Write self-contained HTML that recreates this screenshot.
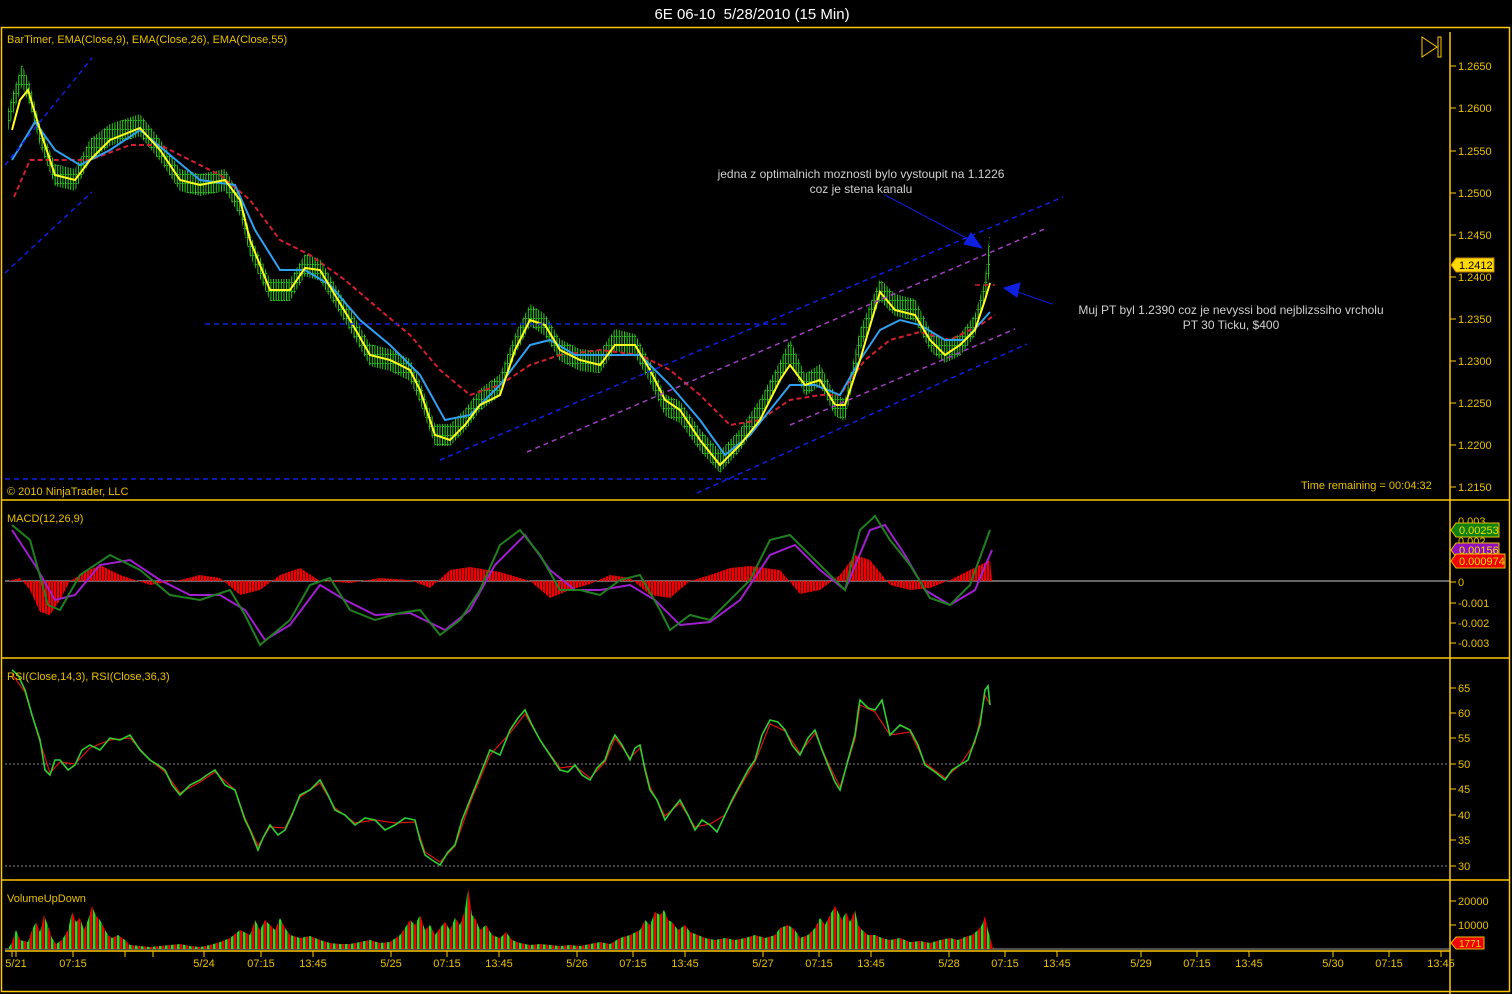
<!DOCTYPE html>
<html><head><meta charset="utf-8"><style>
body{margin:0;background:#000;width:1512px;height:994px;overflow:hidden;font-family:"Liberation Sans",sans-serif}
svg{display:block}
text{font-family:"Liberation Sans",sans-serif}
</style></head><body>
<svg width="1512" height="994" xmlns="http://www.w3.org/2000/svg">
<defs>
<pattern id="vol" width="6" height="10" patternUnits="userSpaceOnUse">
<rect x="0" y="0" width="2.6" height="10" fill="#f00000"/><rect x="3" y="0" width="2.6" height="10" fill="#20e020"/>
</pattern>
<pattern id="hist" width="3" height="10" patternUnits="userSpaceOnUse">
<rect x="0" y="0" width="2.4" height="10" fill="#f00000"/>
</pattern>
<pattern id="pb" width="2.6" height="9" patternUnits="userSpaceOnUse">
<rect x="0" y="0" width="1" height="9" fill="#30d020"/><rect x="1" y="3" width="1" height="1" fill="#30d020"/>
</pattern>
</defs>
<rect width="1512" height="994" fill="#000"/>
<text x="752" y="19" fill="#fff" font-size="15" text-anchor="middle" xml:space="preserve">6E 06-10  5/28/2010 (15 Min)</text>
<g fill="none" stroke="#ffc800" stroke-width="1.5">
<rect x="1.5" y="27.5" width="1508" height="964"/>
<line x1="1" y1="500" x2="1510" y2="500"/>
<line x1="1" y1="658" x2="1510" y2="658"/>
<line x1="1" y1="880" x2="1510" y2="880"/>
<line x1="1450" y1="32" x2="1450" y2="994"/>
<line x1="5" y1="951" x2="1450" y2="951"/>
</g>
<line x1="5" y1="581" x2="1450" y2="581" stroke="#ccc" stroke-width="1"/>
<line x1="5" y1="764" x2="1450" y2="764" stroke="#888" stroke-dasharray="2,2"/>
<line x1="5" y1="866" x2="1450" y2="866" stroke="#888" stroke-dasharray="2,2"/>
<line x1="5" y1="949" x2="1450" y2="949" stroke="#999"/>

<polygon fill="url(#pb)" points="8,109 14,89 22,64 30,84 40,124 55,164 75,169 90,139 110,124 140,114 160,139 180,169 200,174 225,169 240,194 250,234 270,279 290,279 305,254 320,259 335,284 350,309 370,344 390,349 410,359 420,381 435,424 450,424 465,409 480,389 500,374 515,334 530,304 545,314 560,339 580,349 600,351 615,329 635,334 650,361 665,394 680,401 700,429 720,451 740,429 760,399 780,361 790,339 805,374 820,364 835,394 845,399 860,329 880,279 895,294 915,299 930,329 945,341 960,334 975,314 985,279 990,230 990,270 985,301 975,336 960,356 945,363 930,351 915,321 895,316 880,301 860,351 845,421 835,416 820,386 805,396 790,361 780,383 760,421 740,451 720,473 700,451 680,423 665,416 650,383 635,356 615,351 600,373 580,371 560,361 545,336 530,326 515,356 500,396 480,411 465,431 450,446 435,446 420,403 410,381 390,371 370,366 350,331 335,306 320,281 305,276 290,301 270,301 250,256 240,216 225,191 200,196 180,191 160,161 140,136 110,146 90,161 75,191 55,186 40,146 30,106 22,86 14,111 8,131"/>

<polyline fill="none" stroke="#d02030" stroke-width="2" stroke-dasharray="5,3" points="14,197 30,160 55,160 90,160 130,145 160,145 190,160 220,175 250,200 280,240 310,255 345,280 380,310 410,335 440,370 470,395 500,385 530,365 560,355 600,350 640,355 670,370 700,395 730,425 760,420 790,400 820,395 840,395 865,360 890,340 920,332 950,340 980,325 995,315"/>
<polyline fill="none" stroke="#30a0f0" stroke-width="2" points="12,160 35,122 55,150 80,165 110,150 140,130 170,155 200,180 235,185 255,230 280,270 305,270 330,285 360,320 390,345 420,375 445,420 470,415 500,385 530,345 550,340 575,355 610,355 640,355 670,385 700,420 725,455 750,435 770,410 790,385 815,385 840,395 860,360 880,330 900,320 920,325 945,340 965,340 990,312"/>
<polyline fill="none" stroke="#ffff20" stroke-width="2" points="12,130 20,100 28,90 40,130 55,175 75,180 90,160 110,140 140,128 160,150 180,180 200,185 225,180 240,200 250,240 270,290 290,290 305,268 320,270 335,295 350,320 370,355 390,360 410,370 420,390 435,435 450,440 465,425 480,405 500,395 515,350 530,320 545,325 560,350 580,360 600,365 615,345 635,345 650,370 665,400 680,410 700,440 720,465 740,445 760,420 780,380 790,365 805,385 820,380 835,405 845,405 860,360 880,292 895,310 915,315 930,340 945,355 960,345 975,330 985,300 990,283"/>

<polygon fill="url(#hist)" points="8,581 20,578 30,590 40,612 50,615 60,600 70,581 85,572 100,565 120,575 150,585 180,580 200,575 220,578 240,595 260,590 280,575 300,568 320,581 350,583 380,578 410,580 430,588 450,570 470,567 500,572 530,581 550,598 570,590 590,584 610,575 630,578 650,595 670,598 690,581 710,575 730,568 750,566 780,570 800,594 820,590 840,575 855,555 870,560 890,585 910,590 930,588 950,580 970,570 990,560 992,581"/>
<polyline fill="none" stroke="#a020d0" stroke-width="2" points="12,530 35,565 55,600 75,595 100,565 130,560 160,580 190,595 220,595 245,610 265,640 290,625 320,585 345,600 375,615 410,613 445,630 470,610 495,565 525,535 550,570 575,590 600,590 630,585 655,600 680,625 710,622 740,600 770,555 795,545 820,570 845,590 870,530 885,525 905,555 925,590 950,605 975,590 992,550"/>
<polyline fill="none" stroke="#208020" stroke-width="2" points="12,525 30,540 48,605 60,610 80,575 110,555 140,570 170,595 200,600 230,590 245,615 260,645 290,620 310,585 330,578 350,610 375,620 400,613 420,610 440,635 460,620 480,590 500,545 520,530 540,555 560,590 580,590 600,595 620,580 640,575 660,610 670,630 690,615 710,620 730,600 750,580 770,540 790,535 810,555 830,575 845,590 860,530 875,516 890,540 910,565 930,598 950,605 970,585 990,530"/>

<polyline fill="none" stroke="#e01010" stroke-width="1.2" points="12,674 25,692 40,742 50,773 60,762 75,764 90,748 110,740 130,738 150,760 165,772 180,793 200,782 215,772 235,790 245,818 258,846 270,827 285,828 300,797 320,783 335,808 355,823 375,820 395,823 415,822 425,852 440,862 455,846 470,803 490,755 510,733 525,714 540,740 560,768 575,766 590,778 605,762 615,738 630,758 640,748 650,787 665,816 680,803 695,827 710,824 725,815 740,787 755,762 770,724 785,731 800,753 815,733 830,767 840,787 855,739 860,705 875,712 890,735 910,732 925,763 945,778 960,765 975,743 985,695 990,705"/>
<polyline fill="none" stroke="#30d030" stroke-width="1.6" points="12,670 18,675 25,690 32,715 40,740 45,770 50,775 55,760 60,760 68,770 75,765 82,750 90,745 100,750 110,738 120,740 130,735 140,750 150,760 158,765 165,770 172,785 180,795 190,785 200,780 207,775 215,770 225,785 235,790 240,805 245,820 250,830 258,850 263,838 270,825 278,835 285,830 292,815 300,795 310,790 320,780 328,795 335,810 345,815 355,825 365,818 375,820 385,830 395,825 405,818 415,820 420,840 425,855 432,860 440,865 448,852 455,845 462,820 470,800 480,775 490,750 500,755 510,730 518,718 525,710 532,725 540,740 550,755 560,770 568,772 575,765 582,775 590,780 597,768 605,760 610,745 615,735 622,745 630,760 635,748 640,745 645,770 650,790 657,800 665,820 672,810 680,800 688,815 695,830 702,820 710,825 717,832 725,815 732,800 740,785 748,770 755,760 762,735 770,720 778,722 785,730 792,745 800,755 808,738 815,730 822,750 830,770 835,782 840,790 848,760 855,735 858,712 860,700 868,708 875,710 882,700 890,735 900,725 910,730 918,745 925,765 935,772 945,780 952,770 960,765 968,760 975,740 980,725 985,690 988,686 990,705"/>

<polygon fill="url(#vol)" points="8,949 12,942 16,930 20,940 28,942 32,930 36,922 40,932 44,915 48,926 52,938 56,944 62,940 68,930 72,912 76,922 80,918 84,930 88,920 92,906 96,916 100,920 104,928 108,935 112,938 118,935 125,940 130,945 140,946 150,947 160,946 170,945 180,944 190,946 200,947 210,945 220,942 230,938 240,930 250,935 255,920 260,930 265,920 270,925 275,930 280,918 285,928 290,935 300,938 310,936 320,940 330,943 340,944 350,944 360,942 370,940 380,943 390,942 400,935 405,928 410,920 415,925 420,915 425,930 430,925 435,935 440,928 445,922 450,930 455,918 460,925 465,910 468,888 472,915 476,920 480,930 486,925 492,935 500,938 506,932 512,940 520,943 530,945 540,944 550,945 560,946 570,945 580,946 590,944 600,942 610,944 620,938 630,935 640,930 645,920 650,925 655,912 660,915 664,910 668,920 672,922 678,930 685,925 690,932 698,935 705,938 715,940 725,938 735,940 745,938 755,935 765,938 775,935 780,928 788,925 795,930 800,938 808,935 815,928 820,918 825,925 830,915 835,906 838,912 842,920 846,912 850,922 855,910 858,925 862,930 868,935 875,935 882,938 890,940 900,938 910,942 920,941 930,943 940,940 950,938 958,940 965,937 972,935 978,930 982,925 985,916 988,930 992,945 994,949"/>

<g fill="#e8c000" font-size="11">
<text x="7" y="43">BarTimer, EMA(Close,9), EMA(Close,26), EMA(Close,55)</text>
<text x="7" y="495">© 2010 NinjaTrader, LLC</text>
<text x="1301" y="489">Time remaining = 00:04:32</text>
<text x="7" y="522">MACD(12,26,9)</text>
<text x="7" y="680">RSI(Close,14,3), RSI(Close,36,3)</text>
<text x="7" y="902">VolumeUpDown</text>
</g>
<g fill="#e8c000" font-size="11">
<text x="1458" y="70">1.2650</text><text x="1458" y="112">1.2600</text><text x="1458" y="155">1.2550</text><text x="1458" y="197">1.2500</text><text x="1458" y="239">1.2450</text><text x="1458" y="281">1.2400</text><text x="1458" y="323">1.2350</text><text x="1458" y="365">1.2300</text><text x="1458" y="407">1.2250</text><text x="1458" y="449">1.2200</text><text x="1458" y="491">1.2150</text>
<text x="1458" y="525">0.003</text><text x="1458" y="545">0.002</text><text x="1458" y="586">0</text><text x="1458" y="607">-0.001</text><text x="1458" y="627">-0.002</text><text x="1458" y="647">-0.003</text>
<text x="1458" y="692">65</text><text x="1458" y="717">60</text><text x="1458" y="742">55</text><text x="1458" y="768">50</text><text x="1458" y="793">45</text><text x="1458" y="819">40</text><text x="1458" y="844">35</text><text x="1458" y="870">30</text>
<text x="1458" y="905">20000</text><text x="1458" y="929">10000</text>
</g>
<g stroke="#ffc800" stroke-width="1">
<line x1="1450" y1="66" x2="1456" y2="66"/><line x1="1450" y1="108" x2="1456" y2="108"/><line x1="1450" y1="151" x2="1456" y2="151"/><line x1="1450" y1="193" x2="1456" y2="193"/><line x1="1450" y1="235" x2="1456" y2="235"/><line x1="1450" y1="277" x2="1456" y2="277"/><line x1="1450" y1="319" x2="1456" y2="319"/><line x1="1450" y1="361" x2="1456" y2="361"/><line x1="1450" y1="403" x2="1456" y2="403"/><line x1="1450" y1="445" x2="1456" y2="445"/><line x1="1450" y1="487" x2="1456" y2="487"/>
<line x1="1450" y1="582" x2="1456" y2="582"/><line x1="1450" y1="603" x2="1456" y2="603"/><line x1="1450" y1="623" x2="1456" y2="623"/><line x1="1450" y1="643" x2="1456" y2="643"/>
<line x1="1450" y1="688" x2="1456" y2="688"/><line x1="1450" y1="713" x2="1456" y2="713"/><line x1="1450" y1="738" x2="1456" y2="738"/><line x1="1450" y1="764" x2="1456" y2="764"/><line x1="1450" y1="789" x2="1456" y2="789"/><line x1="1450" y1="815" x2="1456" y2="815"/><line x1="1450" y1="840" x2="1456" y2="840"/><line x1="1450" y1="866" x2="1456" y2="866"/>
<line x1="1450" y1="901" x2="1456" y2="901"/><line x1="1450" y1="925" x2="1456" y2="925"/>
<path d="M12 951v6M16 951v6M73 951v6M125 951v6M153 951v6M204 951v6M261 951v6M313 951v6M391 951v6M447 951v6M499 951v6M577 951v6M633 951v6M685 951v6M763 951v6M819 951v6M871 951v6M949 951v6M1005 951v6M1057 951v6M1141 951v6M1197 951v6M1249 951v6M1333 951v6M1389 951v6M1441 951v6"/>
</g>
<g fill="#e8c000" font-size="11" text-anchor="middle">
<text x="16" y="967">5/21</text><text x="73" y="967">07:15</text><text x="204" y="967">5/24</text><text x="261" y="967">07:15</text><text x="313" y="967">13:45</text><text x="391" y="967">5/25</text><text x="447" y="967">07:15</text><text x="499" y="967">13:45</text><text x="577" y="967">5/26</text><text x="633" y="967">07:15</text><text x="685" y="967">13:45</text><text x="763" y="967">5/27</text><text x="819" y="967">07:15</text><text x="871" y="967">13:45</text><text x="949" y="967">5/28</text><text x="1005" y="967">07:15</text><text x="1057" y="967">13:45</text><text x="1141" y="967">5/29</text><text x="1197" y="967">07:15</text><text x="1249" y="967">13:45</text><text x="1333" y="967">5/30</text><text x="1389" y="967">07:15</text><text x="1441" y="967">13:45</text>
</g>
<path d="M1422 37 L1437 47 L1422 57 Z" fill="none" stroke="#ffc800"/>
<rect x="1438" y="37" width="3" height="20" fill="none" stroke="#ffc800"/>
<g fill="none" stroke-width="1.5" stroke-dasharray="5,4">
<line x1="5" y1="273" x2="92" y2="192" stroke="#1020e0"/>
<line x1="5" y1="165" x2="92" y2="58" stroke="#1020e0"/>
<line x1="205" y1="324" x2="790" y2="324" stroke="#1020e0"/>
<line x1="5" y1="479" x2="768" y2="479" stroke="#1020e0"/>
<line x1="440" y1="460" x2="1063" y2="197" stroke="#1020e0"/>
<line x1="697" y1="493" x2="1027" y2="344" stroke="#1020e0"/>
<line x1="527" y1="452" x2="1047" y2="228" stroke="#a040c0"/>
<line x1="790" y1="425" x2="1015" y2="329" stroke="#a040c0"/>
<line x1="975" y1="285" x2="995" y2="285" stroke="#d02030"/>
</g>
<g stroke="#1020e0" fill="#1020e0">
<line x1="885" y1="195" x2="970" y2="240"/><path d="M982 248 L964 244 L971 233 Z"/>
<line x1="1052" y1="304" x2="1015" y2="291"/><path d="M1004 288 L1020 283 L1017 297 Z"/>
</g>
<g fill="#d0d0d0" font-size="12" text-anchor="middle">
<text x="861" y="178">jedna z optimalnich moznosti bylo vystoupit na 1.1226</text>
<text x="861" y="193">coz je stena kanalu</text>
<text x="1231" y="314">Muj PT byl 1.2390 coz je nevyssi bod nejblizssiho vrcholu</text>
<text x="1231" y="329">PT 30 Ticku, $400</text>
</g>
<path d="M1451 265 L1456 258 L1494 258 L1494 272 L1456 272 Z" fill="#ffd800" stroke="#c08000"/>
<text x="1459" y="269" font-size="11" fill="#000">1.2412</text>
<path d="M1451 530 L1456 523 L1499 523 L1499 537 L1456 537 Z" fill="#108010" stroke="#e8c000"/>
<text x="1459" y="534" font-size="11" fill="#e8e000">0.00253</text>
<path d="M1451 550 L1456 543 L1499 543 L1499 557 L1456 557 Z" fill="#9010c0" stroke="#e8c000"/>
<text x="1459" y="554" font-size="11" fill="#e8e000">0.00156</text>
<path d="M1451 561 L1456 554 L1505 554 L1505 568 L1456 568 Z" fill="#f00000" stroke="#e8c000"/>
<text x="1459" y="565" font-size="11" fill="#e8e000">0.000974</text>
<path d="M1451 943 L1456 937 L1484 937 L1484 949 L1456 949 Z" fill="#f00000" stroke="#e8c000"/>
<text x="1459" y="947" font-size="10" fill="#e8e000">1771</text>
</svg>
</body></html>
